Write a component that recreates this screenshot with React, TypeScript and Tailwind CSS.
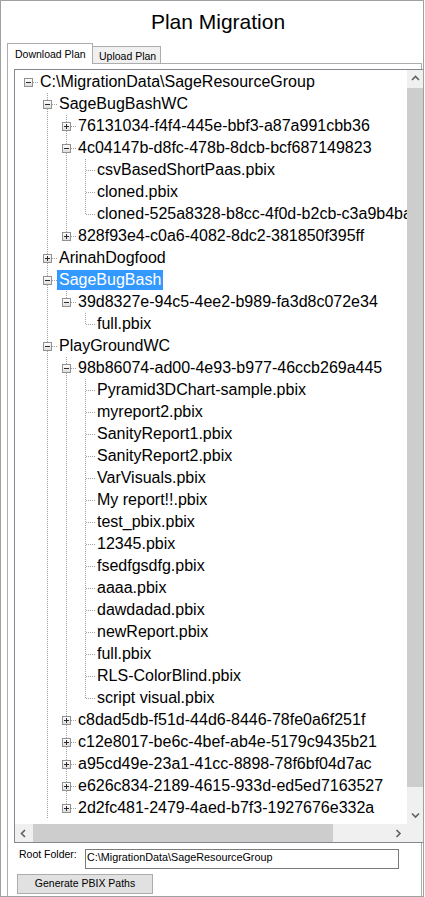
import React from 'react';

type Node = {
  label: string;
  kids?: Node[];
  plus?: boolean;
  selected?: boolean;
  more?: boolean; // more siblings below the visible area
};

type Row = {
  label: string;
  level: number;
  lines: boolean[];
  last: boolean;
  box: 'plus' | 'minus' | null;
  selected?: boolean;
};

const pbix = (names: string[]): Node[] => names.map((label) => ({ label }));

const TREE: Node = {
  label: 'C:\\MigrationData\\SageResourceGroup',
  kids: [
    {
      label: 'SageBugBashWC',
      kids: [
        { label: '76131034-f4f4-445e-bbf3-a87a991cbb36', plus: true },
        {
          label: '4c04147b-d8fc-478b-8dcb-bcf687149823',
          kids: pbix(['csvBasedShortPaas.pbix', 'cloned.pbix', 'cloned-525a8328-b8cc-4f0d-b2cb-c3a9b4ba2e17.pbix']),
        },
        { label: '828f93e4-c0a6-4082-8dc2-381850f395ff', plus: true },
      ],
    },
    { label: 'ArinahDogfood', plus: true },
    {
      label: 'SageBugBash',
      selected: true,
      kids: [{ label: '39d8327e-94c5-4ee2-b989-fa3d8c072e34', kids: pbix(['full.pbix']) }],
    },
    {
      label: 'PlayGroundWC',
      more: true,
      kids: [
        {
          label: '98b86074-ad00-4e93-b977-46ccb269a445',
          kids: pbix([
            'Pyramid3DChart-sample.pbix',
            'myreport2.pbix',
            'SanityReport1.pbix',
            'SanityReport2.pbix',
            'VarVisuals.pbix',
            'My report!!.pbix',
            'test_pbix.pbix',
            '12345.pbix',
            'fsedfgsdfg.pbix',
            'aaaa.pbix',
            'dawdadad.pbix',
            'newReport.pbix',
            'full.pbix',
            'RLS-ColorBlind.pbix',
            'script visual.pbix',
          ]),
        },
        { label: 'c8dad5db-f51d-44d6-8446-78fe0a6f251f', plus: true },
        { label: 'c12e8017-be6c-4bef-ab4e-5179c9435b21', plus: true },
        { label: 'a95cd49e-23a1-41cc-8898-78f6bf04d7ac', plus: true },
        { label: 'e626c834-2189-4615-933d-ed5ed7163527', plus: true },
        { label: '2d2fc481-2479-4aed-b7f3-1927676e332a', plus: true },
      ],
    },
  ],
};

function flatten(node: Node, level: number, lines: boolean[], last: boolean, out: Row[]) {
  out.push({
    label: node.label,
    level,
    lines,
    last,
    box: node.plus ? 'plus' : node.kids ? 'minus' : null,
    selected: node.selected,
  });
  if (node.kids) {
    node.kids.forEach((k, i) => {
      const kidLast = i === node.kids!.length - 1 && !k.more;
      flatten(k, level + 1, [...lines, level >= 1 ? !last : false], kidLast, out);
    });
  }
  return out;
}

const ROWS = flatten(TREE, 0, [], true, []);

const DOT = '#a0a0a0';

// one 19x22 cell of tree guide lines
const Guide = ({ row }: { row?: Row }) => (
  <svg width="19" height="22" className="shrink-0" shapeRendering="crispEdges">
    {row && row.level > 0 && (
      <line x1="9.5" y1="0" x2="9.5" y2={row.last ? 11 : 22} stroke={DOT} strokeDasharray="1 1" />
    )}
    {row && <line x1="10" y1="11.5" x2="19" y2="11.5" stroke={DOT} strokeDasharray="1 1" />}
    {row && row.box && (
      <g>
        <defs>
          <linearGradient id="bx" x1="0" y1="0" x2="0" y2="1">
            <stop offset="0" stopColor="#ffffff" />
            <stop offset="1" stopColor="#dcdcdc" />
          </linearGradient>
        </defs>
        <rect x="5.5" y="7.5" width="8" height="8" fill="url(#bx)" stroke="#919191" />
        <line x1="7" y1="11.5" x2="12" y2="11.5" stroke="#2a2a2a" />
        {row.box === 'plus' && <line x1="9.5" y1="9" x2="9.5" y2="14" stroke="#2a2a2a" />}
      </g>
    )}
  </svg>
);

const Vline = ({ on }: { on: boolean }) => (
  <svg width="19" height="22" className="shrink-0" shapeRendering="crispEdges">
    {on && <line x1="9.5" y1="0" x2="9.5" y2="22" stroke={DOT} strokeDasharray="1 1" />}
  </svg>
);

const Chevron = ({ dir }: { dir: 'up' | 'down' | 'left' | 'right' }) => {
  const pts = {
    up: '1,5 4.5,1.5 8,5',
    down: '1,1.5 4.5,5 8,1.5',
    left: '5,1 1.5,4.5 5,8',
    right: '1.5,1 5,4.5 1.5,8',
  }[dir];
  const horiz = dir === 'up' || dir === 'down';
  return (
    <svg width={horiz ? 9 : 7} height={horiz ? 7 : 9}>
      <polyline points={pts} fill="none" stroke="#606060" strokeWidth="1.6" />
    </svg>
  );
};

export default function App() {
  const font = "font-['Liberation_Sans',Arial,sans-serif]";
  return (
    <div className={`${font} w-[424px] h-[897px] border border-[#a0a0a0] bg-white flex flex-col overflow-hidden text-black`}>
      <div className="pt-[9px] pl-[12px] h-[33px] text-center text-[21px] leading-[24px]">Plan Migration</div>

      {/* tabs */}
      <div className="mt-[9px] ml-[6px] flex items-end h-[20px] text-[10.5px] leading-[12px]">
        <div className="relative z-10 -mb-px h-[21px] w-[86px] border-l border-t border-r border-[#adadad] bg-white pl-[7px] pt-[4px]">
          Download Plan
        </div>
        <div className="h-[17px] w-[68px] border-t border-r border-[#adadad] bg-[#f0f0f0] pl-[6px] pt-[3px]">
          Upload Plan
        </div>
      </div>

      {/* tab page */}
      <div className="flex-1 ml-[6px] w-[415px] border-l border-t border-r border-[#adadad] pt-[5px] flex flex-col">
        <div className="relative ml-[6px] -mr-[3px] w-[410px] h-[774px] border border-[#828790] grid grid-cols-[392px_16px] grid-rows-[754px_18px]">
          <div className="overflow-hidden pt-[1px] text-[16px] leading-[22px]">
            {ROWS.map((r, i) => (
              <div key={i} className="flex h-[22px] items-center whitespace-nowrap">
                <div className="w-[4px] shrink-0" />
                {Array.from({ length: r.level }, (_, k) => (
                  <Vline key={k} on={k >= 1 && r.lines[k]} />
                ))}
                <Guide row={r} />
                <span
                  className={`h-[20px] leading-[20px] px-[2px] ${r.selected ? 'bg-[#3399ff] text-white' : ''}`}
                >
                  {r.label}
                </span>
              </div>
            ))}
          </div>

          {/* vertical scrollbar */}
          <div className="bg-[#f0f0f0] flex flex-col">
            <div className="h-[17px] flex items-center justify-center">
              <Chevron dir="up" />
            </div>
            <div className="h-[699px] bg-[#cdcdcd] mt-[1px]" />
            <div className="flex-1" />
            <div className="h-[17px] flex items-center justify-center">
              <Chevron dir="down" />
            </div>
          </div>

          {/* horizontal scrollbar */}
          <div className="bg-[#f0f0f0] flex items-center">
            <div className="w-[17px] h-full flex items-center justify-center shrink-0">
              <Chevron dir="left" />
            </div>
            <div className="ml-[1px] w-[300px] h-[18px] bg-[#cdcdcd]" />
            <div className="flex-1" />
            <div className="w-[17px] h-full flex items-center justify-center shrink-0">
              <Chevron dir="right" />
            </div>
          </div>
          <div className="bg-[#f0f0f0]" />
        </div>

        {/* root folder */}
        <div className="mt-[4px] pl-[11px] flex items-start text-[10.5px] leading-[12px]">
          <div className="w-[66px] pt-[1px]">Root Folder:</div>
          <div className="mt-[2px] w-[314px] h-[20px] border border-[#7a7a7a] pl-[1px] pt-[1px] text-[10.8px] leading-[13px]">
            C:\MigrationData\SageResourceGroup
          </div>
        </div>
        <div className="mt-[5px] ml-[9px] w-[136px] h-[20px] border border-[#adadad] bg-[#e1e1e1] text-center text-[10.5px] leading-[12px] pt-[2px]">
          Generate PBIX Paths
        </div>
      </div>
    </div>
  );
}
